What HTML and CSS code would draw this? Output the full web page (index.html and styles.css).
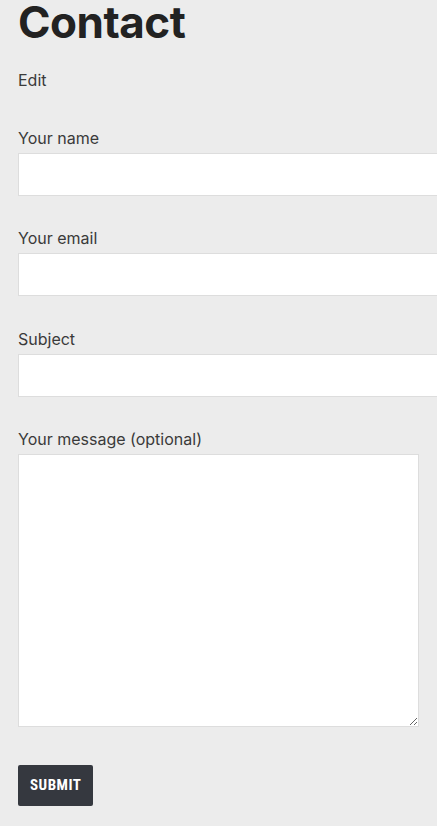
FILE: index.html
```html
<!DOCTYPE html>
<html lang="en">
<head>
<meta charset="utf-8">
<title>Contact</title>
<link rel="stylesheet" href="styles.css">
</head>
<body>
<main class="page">
  <h1 class="title">Contact</h1>
  <a class="edit" href="#">Edit</a>
  <form class="form">
    <div class="field">
      <label class="label" for="name">Your name</label>
      <input class="input" id="name" type="text">
    </div>
    <div class="field">
      <label class="label" for="email">Your email</label>
      <input class="input" id="email" type="email">
    </div>
    <div class="field">
      <label class="label" for="subject">Subject</label>
      <input class="input" id="subject" type="text">
    </div>
    <div class="field field-last">
      <label class="label" for="message">Your message (optional)</label>
      <textarea class="textarea" id="message"></textarea>
    </div>
    <button class="submit" type="button">Submit</button>
  </form>
</main>
</body>
</html>
```
FILE: styles.css
```css
html, body {
  margin: 0;
  padding: 0;
  background: #ececec;
  overflow: hidden;
}
.page {
  padding: 0 0 0 18px;
  font-family: Inter, "Noto Sans", sans-serif;
  color: #3a3a3a;
  font-size: 16px;
}
.title {
  margin: 0;
  font-size: 44px;
  font-weight: 700;
  line-height: 44px;
  color: #222222;
  letter-spacing: -0.5px;
}
.edit {
  display: block;
  margin-top: 26px;
  color: #3a3a3a;
  text-decoration: none;
  line-height: 20px;
}
.form {
  margin-top: 36px;
  display: flex;
  flex-direction: column;
  align-items: flex-start;
}
.field {
  display: flex;
  flex-direction: column;
  margin-bottom: 30.33px;
}
.label {
  line-height: 24px;
  margin-bottom: 3px;
  color: #3a3a3a;
}
.input {
  box-sizing: border-box;
  width: 440px;
  height: 43px;
  margin: 0;
  background: #ffffff;
  border: 1px solid #dddddd;
  border-radius: 0;
  padding: 0 10px;
  font: inherit;
}
.textarea {
  box-sizing: border-box;
  width: 401px;
  height: 273px;
  margin: 0;
  background: #ffffff;
  border: 1px solid #dddddd;
  border-radius: 0;
  padding: 10px;
  font: inherit;
  resize: both;
}
.field-last {
  margin-bottom: 38px;
}
.submit {
  box-sizing: border-box;
  height: 41px;
  padding: 0 12px;
  background: #35383f;
  color: #ffffff;
  border: 0;
  border-radius: 2px;
  font-family: "Roboto Condensed", Roboto, sans-serif;
  font-stretch: condensed;
  font-weight: 700;
  font-size: 15px;
  text-transform: uppercase;
  letter-spacing: 0.5px;
}
```
